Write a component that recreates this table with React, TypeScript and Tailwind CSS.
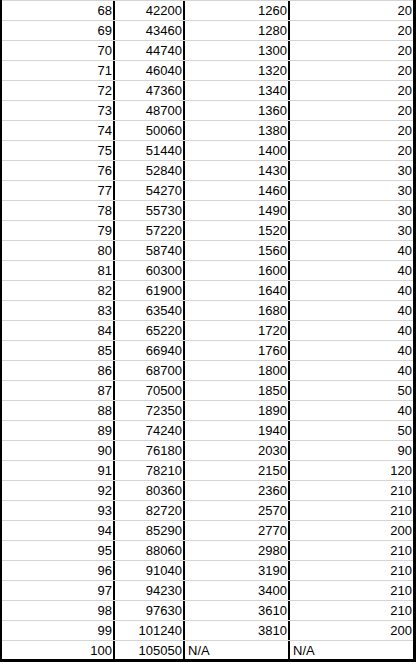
const rows: [number, number, string, string][] = [
  [68, 42200, "1260", "20"],
  [69, 43460, "1280", "20"],
  [70, 44740, "1300", "20"],
  [71, 46040, "1320", "20"],
  [72, 47360, "1340", "20"],
  [73, 48700, "1360", "20"],
  [74, 50060, "1380", "20"],
  [75, 51440, "1400", "20"],
  [76, 52840, "1430", "30"],
  [77, 54270, "1460", "30"],
  [78, 55730, "1490", "30"],
  [79, 57220, "1520", "30"],
  [80, 58740, "1560", "40"],
  [81, 60300, "1600", "40"],
  [82, 61900, "1640", "40"],
  [83, 63540, "1680", "40"],
  [84, 65220, "1720", "40"],
  [85, 66940, "1760", "40"],
  [86, 68700, "1800", "40"],
  [87, 70500, "1850", "50"],
  [88, 72350, "1890", "40"],
  [89, 74240, "1940", "50"],
  [90, 76180, "2030", "90"],
  [91, 78210, "2150", "120"],
  [92, 80360, "2360", "210"],
  [93, 82720, "2570", "210"],
  [94, 85290, "2770", "200"],
  [95, 88060, "2980", "210"],
  [96, 91040, "3190", "210"],
  [97, 94230, "3400", "210"],
  [98, 97630, "3610", "210"],
  [99, 101240, "3810", "200"],
  [100, 105050, "N/A", "N/A"],
];

export default function App() {
  return (
    <div
      className="w-[416px] bg-white text-black border-l-2 border-r-[3px] border-b-[3px] border-black text-[13px]"
      style={{ fontFamily: '"Liberation Sans", Arial, sans-serif' }}
    >
      {rows.map(([lvl, total, step, extra], i) => {
        const last = i === rows.length - 1;
        const na = step === "N/A";
        return (
          <div
            key={lvl}
            className={`flex border-t border-[#d4d4d4] ${last ? "h-[19px]" : "h-[20px]"}`}
          >
            <div className="w-[113px] border-r-2 border-black text-right pr-[1px] leading-[20px]">
              {lvl}
            </div>
            <div className="w-[70px] border-r-2 border-black text-right pr-[1px] leading-[20px]">
              {total}
            </div>
            <div
              className={`w-[105px] border-r-2 border-black leading-[20px] ${
                na ? "text-left pl-[3px]" : "text-right pr-[1px]"
              }`}
            >
              {step}
            </div>
            <div
              className={`w-[123px] leading-[20px] ${
                na ? "text-left pl-[3px]" : "text-right pr-[1px]"
              }`}
            >
              {extra}
            </div>
          </div>
        );
      })}
    </div>
  );
}
